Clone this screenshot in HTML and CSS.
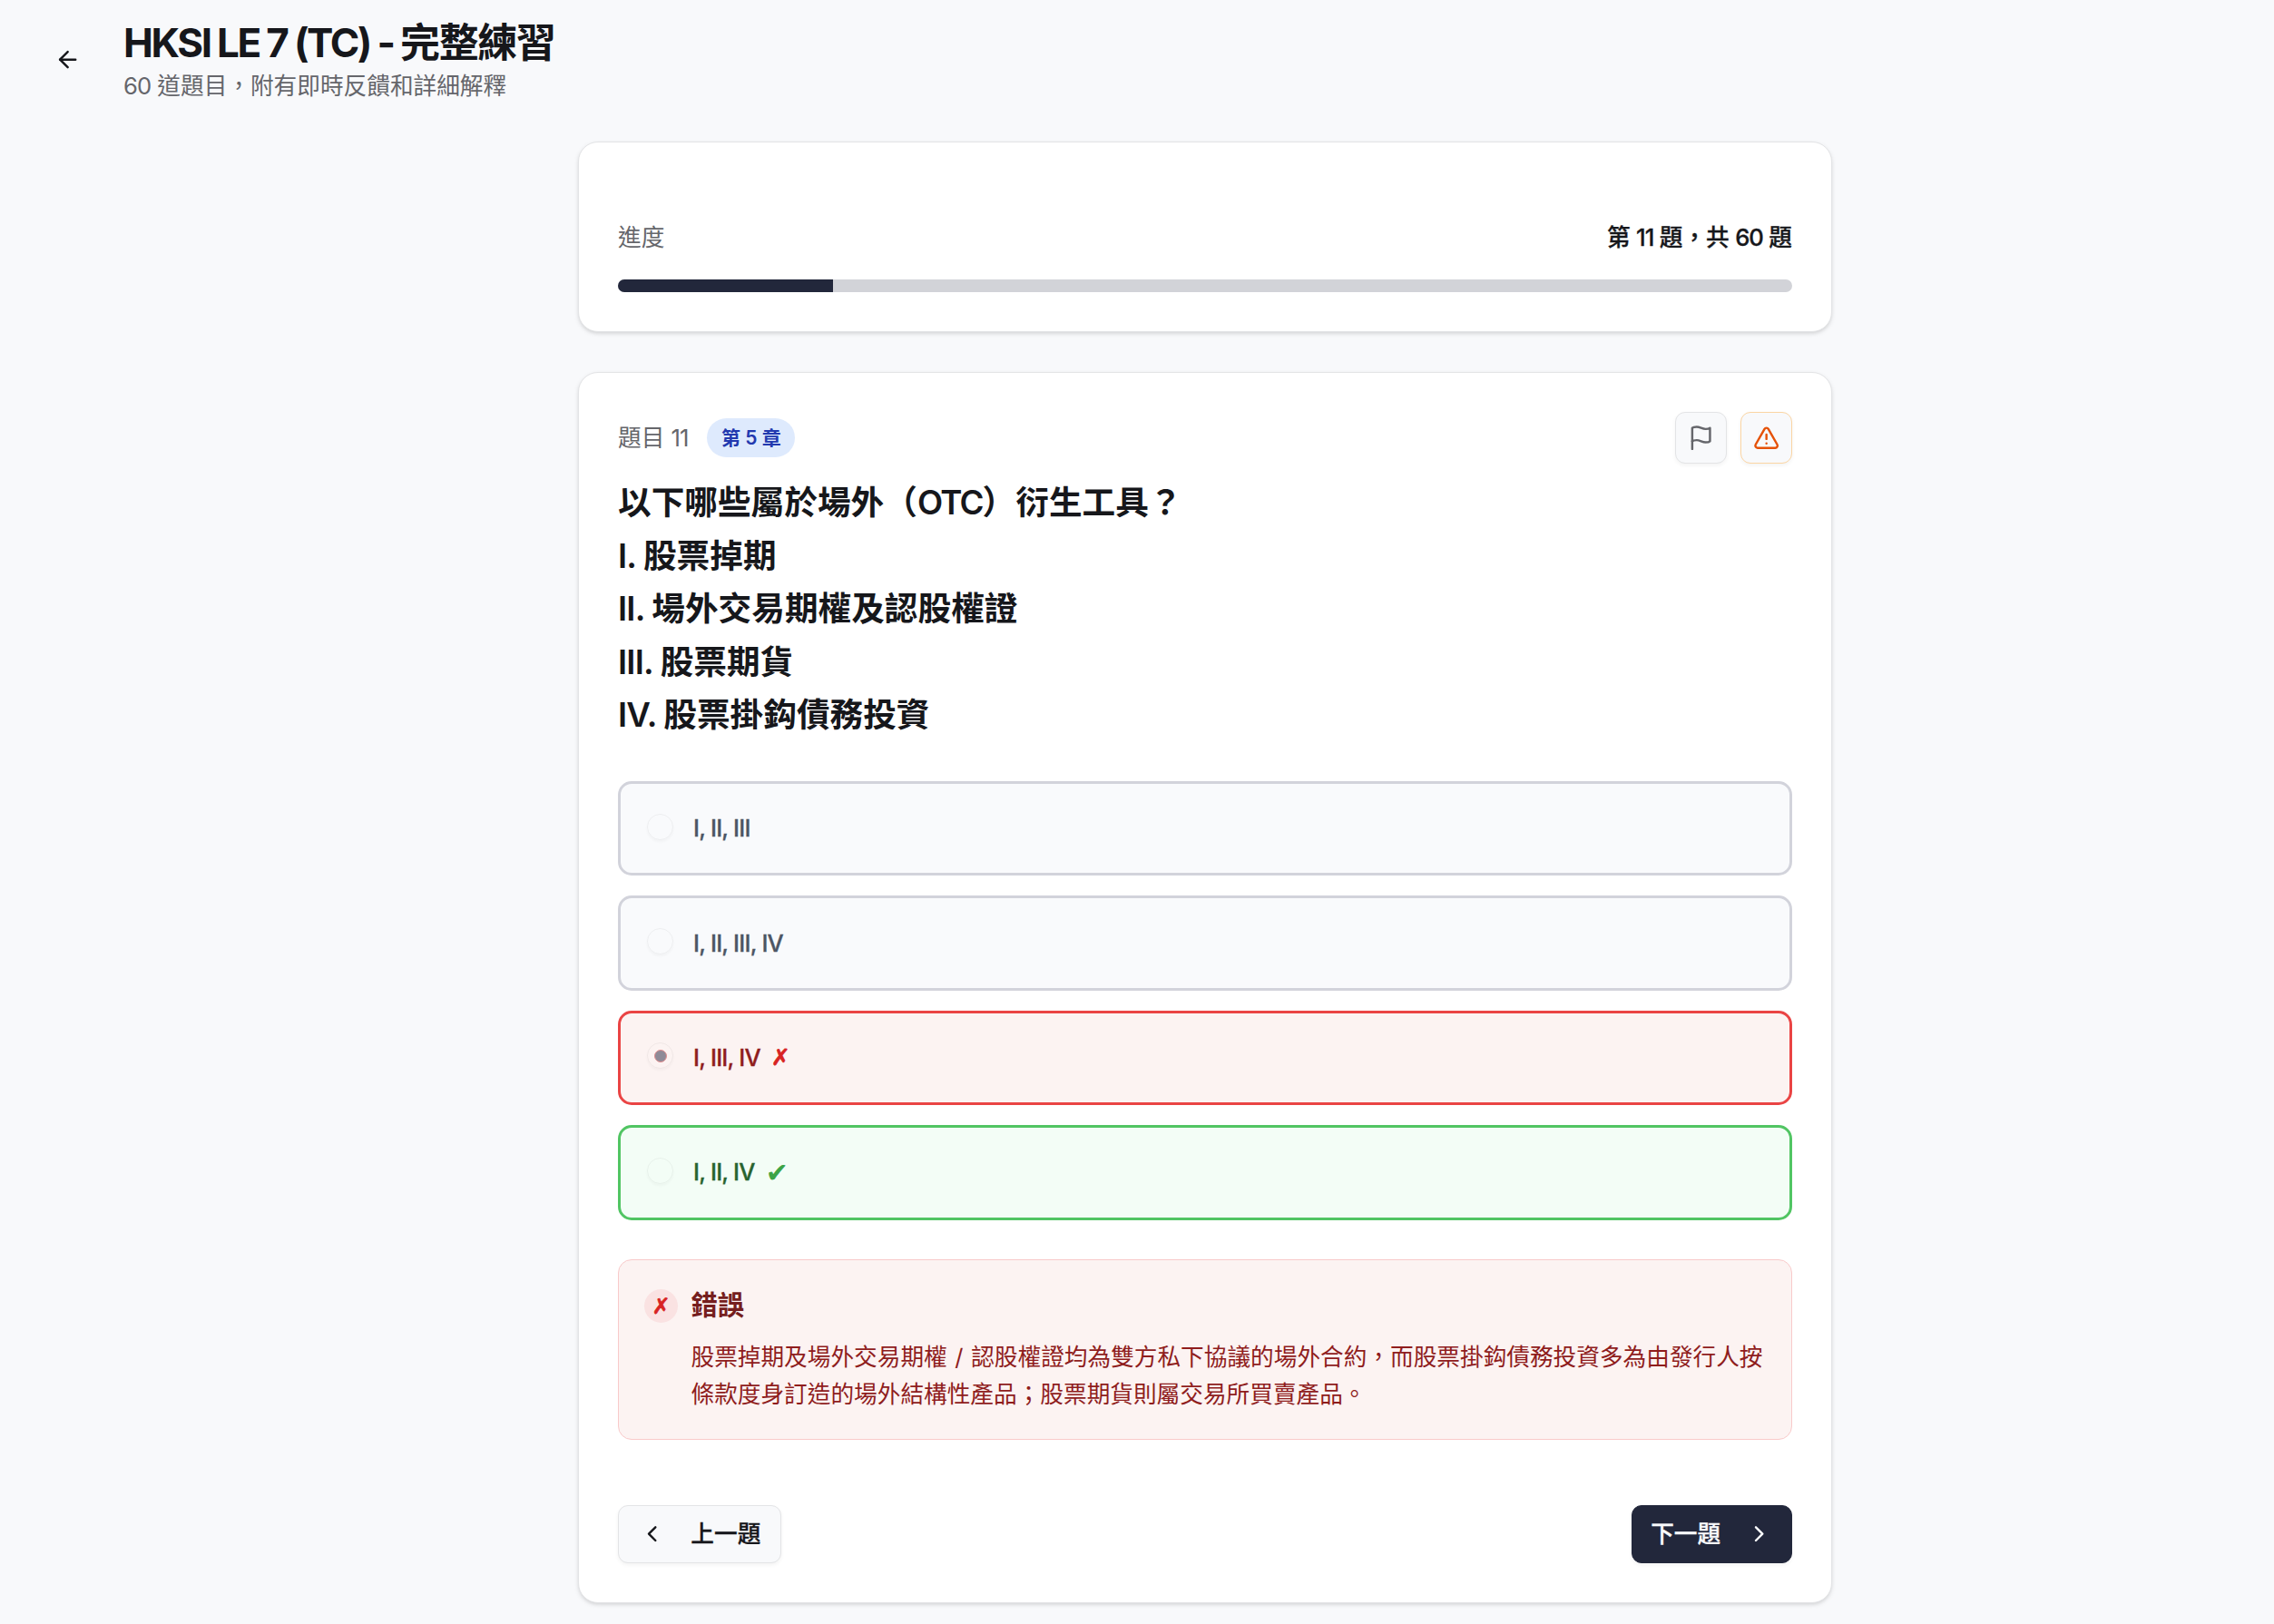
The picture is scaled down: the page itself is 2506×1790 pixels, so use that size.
FILE: index.html
```html
<!DOCTYPE html>
<html lang="zh-Hant">
<head>
<meta charset="utf-8">
<title>HKSI LE 7 (TC) - 完整練習</title>
<link rel="stylesheet" href="styles.css">
</head>
<body>
<header class="header">
  <button class="back" aria-label="返回"><svg class="icon" viewBox="0 0 24 24"><path d="m12 19-7-7 7-7"/><path d="M19 12H5"/></svg></button>
  <div>
    <h1 class="title"><span class="title-latin">HKSI LE 7 (TC) - </span>完整練習</h1>
    <p class="subtitle"><span class="num">60</span> 道題目，附有即時反饋和詳細解釋</p>
  </div>
</header>
<main class="main">
  <section class="card progress-card">
    <div class="progress-row"><span class="muted">進度</span><span class="count">第 <span class="num">11</span> 題，共 <span class="num">60</span> 題</span></div>
    <div class="track"><div class="fill" style="width:18.35%"></div></div>
  </section>
  <section class="card">
    <div class="meta">
      <span class="muted">題目 <span class="num">11</span></span>
      <span class="badge">第 5 章</span>
      <div class="tools">
        <button class="tool" aria-label="標記"><svg class="icon" viewBox="0 0 24 24"><path d="M4 15s1-1 4-1 5 2 8 2 4-1 4-1V3s-1 1-4 1-5-2-8-2-4 1-4 1z"/><path d="M4 22v-7"/></svg></button>
        <button class="tool tool-warn" aria-label="報告問題"><svg class="icon" viewBox="0 0 24 24"><path d="m21.73 18-8-14a2 2 0 0 0-3.48 0l-8 14A2 2 0 0 0 4 21h16a2 2 0 0 0 1.73-3"/><path d="M12 9v4"/><path d="M12 17h.01"/></svg></button>
      </div>
    </div>
    <div class="question">
      <p>以下哪些屬於場外（<span class="q-abbr">OTC</span>）衍生工具？</p>
      <p><span class="q-latin">I. </span>股票掉期</p>
      <p><span class="q-latin">II. </span>場外交易期權及認股權證</p>
      <p><span class="q-latin">III. </span>股票期貨</p>
      <p><span class="q-latin">IV. </span>股票掛鈎債務投資</p>
    </div>
    <div class="options">
      <label class="option"><span class="radio"></span><span class="answer">I, II, III</span></label>
      <label class="option"><span class="radio"></span><span class="answer">I, II, III, IV</span></label>
      <label class="option wrong"><span class="radio"><span class="dot"></span></span><span class="answer">I, III, IV</span><span class="mark">✗</span></label>
      <label class="option right"><span class="radio"></span><span class="answer">I, II, IV</span><span class="mark">✔</span></label>
    </div>
    <div class="feedback">
      <span class="feedback-mark">✗</span>
      <div>
        <h2 class="feedback-title">錯誤</h2>
        <p class="feedback-text">股票掉期及場外交易期權 / 認股權證均為雙方私下協議的場外合約，而股票掛鈎債務投資多為由發行人按<br>條款度身訂造的場外結構性產品；股票期貨則屬交易所買賣產品。</p>
      </div>
    </div>
    <div class="nav">
      <button class="btn"><svg class="icon" viewBox="0 0 24 24"><path d="m15 18-6-6 6-6"/></svg>上一題</button>
      <button class="btn btn-primary">下一題<svg class="icon" viewBox="0 0 24 24"><path d="m9 18 6-6-6-6"/></svg></button>
    </div>
  </section>
</main>
</body>
</html>
```

FILE: styles.css
```css
* { box-sizing: border-box; margin: 0; padding: 0; }
body {
  background: #f8f9fb;
  color: #16171b;
  font-family: Inter, "Noto Sans CJK TC", sans-serif;
  font-size: 25.67px;
  line-height: 37px;
  height: 1790px;
  overflow: hidden;
}
button { font: inherit; color: inherit; background: none; border: 0; }
.icon {
  display: block; width: 29.33px; height: 29.33px; flex: none;
  fill: none; stroke: currentColor; stroke-width: 2;
  stroke-linecap: round; stroke-linejoin: round;
}
.header { display: flex; align-items: center; height: 131px; padding-left: 37.5px; gap: 24.5px; }
.back { width: 74px; height: 66px; display: flex; align-items: center; justify-content: center; }
.title { font-size: 44px; line-height: 57px; font-weight: 700; letter-spacing: -1.4px; white-space: pre; }
.title-latin { letter-spacing: -2.4px; word-spacing: -0.6px; }
.subtitle { color: #65666b; line-height: 37px; }
.num { letter-spacing: -1px; }
.muted { color: #65666b; }
.main { width: 1382px; margin: 25px 0 0 637px; display: flex; flex-direction: column; gap: 44px; }
.card {
  background: #fff; border: 1px solid #e3e4e6; border-radius: 22px; padding: 43px;
  box-shadow: 0 2px 5px rgba(0,0,0,.1), 0 2px 4px -2px rgba(0,0,0,.1);
}
.progress-card { height: 210px; padding-top: 86px; }
.progress-row { display: flex; justify-content: space-between; margin-bottom: 28px; }
.count { font-weight: 500; word-spacing: -0.4px; -webkit-text-stroke: 0.3px currentColor; }
.track { height: 14px; border-radius: 7px; background: #d2d3d8; overflow: hidden; }
.fill { height: 14px; background: #22273b; }
.meta { display: flex; align-items: center; height: 57px; }
.badge {
  margin-left: 21px; height: 43px; padding: 0 15.5px; border-radius: 22px;
  background: #deeafd; color: #2239af; font-size: 21px; line-height: 43px; font-weight: 600;
}
.tools { display: flex; gap: 15px; margin-left: auto; }
.tool {
  width: 57px; height: 57px; display: flex; align-items: center; justify-content: center;
  border: 1px solid #e3e4e6; border-radius: 11px; background: #f8f9fb; color: #65666b;
  box-shadow: 0 2px 4px rgba(0,0,0,.05);
}
.tool-warn { border-color: #fbd5a3; color: #e55208; }
.question { margin-top: 14px; font-size: 36.67px; line-height: 58.6px; font-weight: 600; }
.q-latin { letter-spacing: -0.8px; }
.q-abbr { letter-spacing: -1.8px; }
.options { display: flex; flex-direction: column; gap: 22px; margin-top: 43px; }
.option {
  display: flex; align-items: center; height: 104.4px; padding-left: 29px;
  border: 3px solid #d2d3db; border-radius: 15px; background: #f9fafc; color: #4c5564; font-weight: 500;
}
.radio {
  width: 29px; height: 29px; margin: -4px 22px 0 0; border: 1px solid rgba(0,0,0,.05); border-radius: 50%;
  display: flex; align-items: center; justify-content: center; box-shadow: 0 2px 3px rgba(0,0,0,.03);
}
.dot { width: 14px; height: 14px; border-radius: 50%; background: #8f8a97; border: 1px solid #e28d8e; }
.answer { letter-spacing: -0.8px; margin-top: -1px; -webkit-text-stroke: 0.3px currentColor; }
.mark { font-family: "DejaVu Sans", sans-serif; font-size: 25px; margin-left: 12px; }
.wrong { border-color: #ea4444; background: #fcf3f2; color: #8f1d1d; }
.wrong .mark { color: #d82222; -webkit-text-stroke: 0.7px currentColor; }
.right { border-color: #51c563; background: #f3fdf6; color: #28632f; }
.right .mark { color: #3ba447; font-size: 30px; }
.feedback {
  display: flex; gap: 14.5px; height: 199px; margin-top: 43.4px; padding: 29px 28px;
  border: 1px solid #f9caca; border-radius: 15px; background: #fcf3f2; color: #8f1d1d;
}
.feedback-mark {
  flex: none; width: 37px; height: 37px; margin-top: 3px; border-radius: 50%;
  background: #fae2e2; color: #d82222; text-align: center; line-height: 39px;
  font-family: "DejaVu Sans", sans-serif; font-size: 24px; -webkit-text-stroke: 0.7px currentColor;
}
.feedback-title { font-size: 29.33px; line-height: 42px; font-weight: 700; color: #751e1e; }
.feedback-text { line-height: 41.4px; margin-top: 15px; white-space: nowrap; word-spacing: 1.4px; }
.nav { display: flex; justify-content: space-between; margin-top: 72px; }
.btn {
  height: 64px; padding: 0 22px; display: flex; align-items: center; gap: 28px; font-weight: 500;
  border: 1px solid #e3e4e6; border-radius: 11px; background: #f8f9fb; box-shadow: 0 2px 4px rgba(0,0,0,.05);
  -webkit-text-stroke: 0.3px currentColor;
}
.btn-primary { background: #22273b; border-color: #22273b; color: #f8f9fb; padding: 0 20.5px; }
```
